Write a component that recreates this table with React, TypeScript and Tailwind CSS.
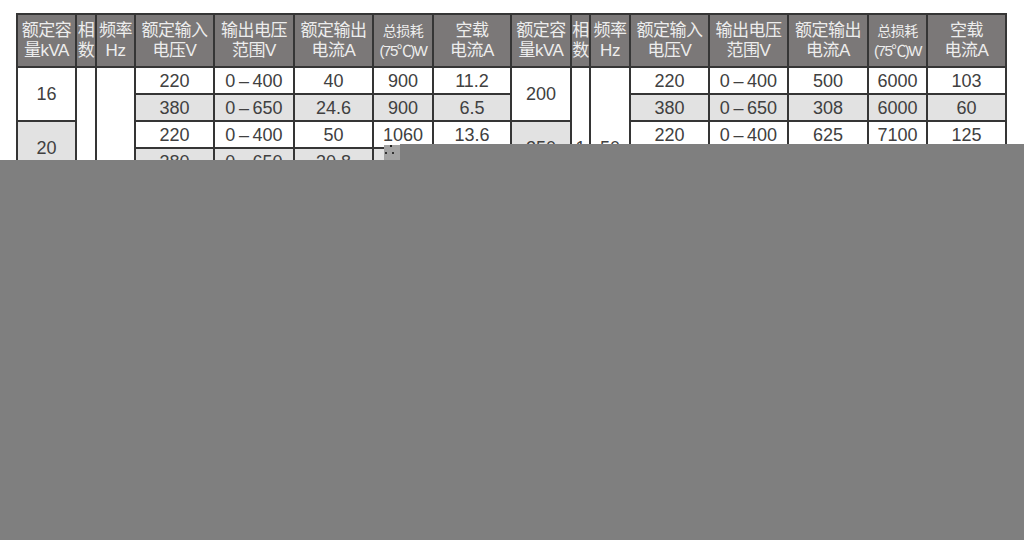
import React from 'react'

const COLS = [59, 20, 39, 79, 80, 79, 60, 78, 60, 19, 40, 79, 79, 80, 59, 79]

const HEAD = [
  ['额定容', '量kVA'],
  ['相', '数'],
  ['频率', 'Hz'],
  ['额定输入', '电压V'],
  ['输出电压', '范围V'],
  ['额定输出', '电流A'],
  ['总损耗', '(75℃)W'],
  ['空载', '电流A'],
]

type Row = { cap?: string; v: string; r: string; a: string; w: string; i: string }

const LO = '0\u2009–\u2009400'
const HI = '0\u2009–\u2009650'

const LEFT: Row[] = [
  { cap: '16', v: '220', r: LO, a: '40', w: '900', i: '11.2' },
  { v: '380', r: HI, a: '24.6', w: '900', i: '6.5' },
  { cap: '20', v: '220', r: LO, a: '50', w: '1060', i: '13.6' },
  { v: '380', r: HI, a: '30.8', w: '1060', i: '7.9' },
  { cap: '30', v: '220', r: LO, a: '75', w: '1400', i: '19.5' },
  { v: '380', r: HI, a: '46', w: '1400', i: '11.4' },
  { cap: '40', v: '220', r: LO, a: '100', w: '1750', i: '25' },
  { v: '380', r: HI, a: '61.5', w: '1750', i: '14.7' },
]

const RIGHT: Row[] = [
  { cap: '200', v: '220', r: LO, a: '500', w: '6000', i: '103' },
  { v: '380', r: HI, a: '308', w: '6000', i: '60' },
  { cap: '250', v: '220', r: LO, a: '625', w: '7100', i: '125' },
  { v: '380', r: HI, a: '385', w: '7100', i: '74' },
  { cap: '300', v: '220', r: LO, a: '750', w: '8000', i: '150' },
  { v: '380', r: HI, a: '462', w: '8000', i: '88' },
  { cap: '400', v: '220', r: LO, a: '1000', w: '9600', i: '196' },
  { v: '380', r: HI, a: '615', w: '9600', i: '115' },
]

const cell = 'border-2 border-[#353535] text-center align-middle p-0'

function Half({ row, idx, side }: { row: Row; idx: number; side: 'l' | 'r' }) {
  const shade = idx % 2 === 1 ? 'bg-[#e2e2e2]' : 'bg-white'
  const capShade = Math.floor(idx / 2) % 2 === 1 ? 'bg-[#e2e2e2]' : 'bg-white'
  return (
    <>
      {row.cap && (
        <td rowSpan={2} className={`${cell} ${capShade}`}>
          {row.cap}
        </td>
      )}
      {idx === 0 && side === 'l' && (
        <>
          <td rowSpan={8} className={`${cell} bg-white pt-[150px]`}>1</td>
          <td rowSpan={8} className={`${cell} bg-white pt-[150px]`}>50</td>
        </>
      )}
      {idx === 0 && side === 'r' && (
        <>
          <td rowSpan={6} className={`${cell} bg-white`}>1</td>
          <td rowSpan={6} className={`${cell} bg-white`}>50</td>
        </>
      )}
      {idx === 6 && side === 'r' && (
        <>
          <td rowSpan={2} className={`${cell} bg-white`}>1</td>
          <td rowSpan={2} className={`${cell} bg-white`}>50</td>
        </>
      )}
      <td className={`${cell} ${shade}`}>{row.v}</td>
      <td className={`${cell} ${shade} whitespace-nowrap`}>{row.r}</td>
      <td className={`${cell} ${shade}`}>{row.a}</td>
      <td className={`${cell} ${shade}`}>{row.w}</td>
      <td className={`${cell} ${shade}`}>{row.i}</td>
    </>
  )
}

export default function App() {
  return (
    <div
      className="relative w-[1024px] h-[540px] overflow-hidden bg-white"
      style={{ fontFamily: "'Liberation Sans', 'Noto Sans CJK SC', sans-serif" }}
    >
      <div className="pt-[13px] pl-[16px]">
        <table className="table-fixed border-collapse w-[991px] text-[18px] text-[#404040]">
          <colgroup>
            {COLS.map((w, i) => (
              <col key={i} style={{ width: w }} />
            ))}
          </colgroup>
          <thead>
            <tr className="h-[53px] bg-[#7b7878] text-[#ededed]">
              {[...HEAD, ...HEAD].map(([a, b], i) => {
                const small = a === '总损耗'
                return (
                  <th
                    key={i}
                    className={`${cell} font-normal leading-[20px] whitespace-nowrap overflow-hidden ${small ? 'text-[14px] tracking-[-0.5px]' : 'text-[17px] tracking-[-0.5px]'}`}
                  >
                    <div>{a}</div>
                    <div className={small ? 'text-[15px] tracking-[-1.5px]' : ''}>{b}</div>
                  </th>
                )
              })}
            </tr>
          </thead>
          <tbody>
            {LEFT.map((row, i) => (
              <tr key={i} className="h-[27px] leading-none">
                <Half row={row} idx={i} side="l" />
                <Half row={RIGHT[i]} idx={i} side="r" />
              </tr>
            ))}
          </tbody>
        </table>
      </div>

      {/* grey cover over the lower part */}
      <div className="absolute left-0 right-0 top-[160px] bottom-0 bg-[#7f7f7f]" />
      <div className="absolute left-[400px] right-0 top-[144px] h-[16px] bg-[#7f7f7f]" />
      <div className="absolute left-[384px] top-[145px] w-[16px] h-[15px] bg-[#a3a3a3]">
        <div className="absolute left-[6px] top-[0px] w-[2px] h-[2px] bg-[#222]" />
        <div className="absolute left-[1px] top-[7px] w-[2px] h-[2px] bg-[#333]" />
        <div className="absolute left-[8px] top-[7px] w-[2px] h-[2px] bg-[#333]" />
      </div>
    </div>
  )
}
